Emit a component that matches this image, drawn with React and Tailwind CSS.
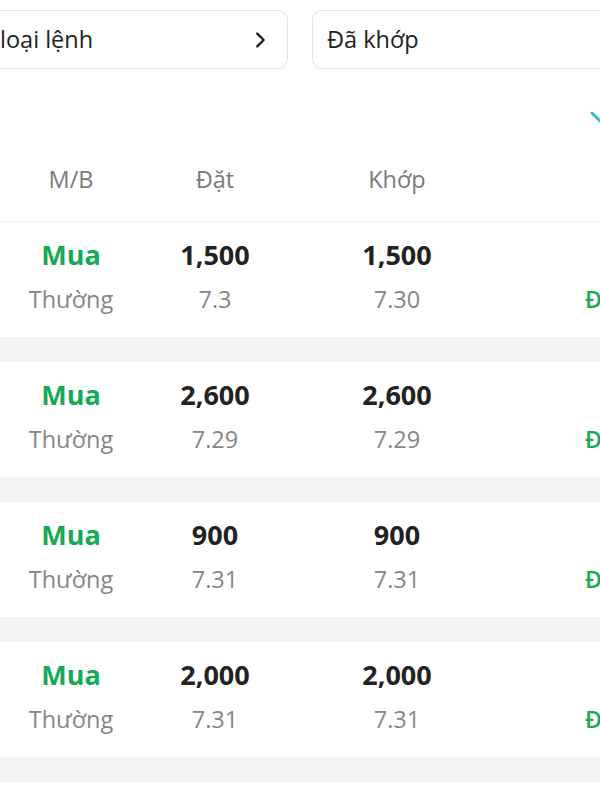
import React from "react";

const orders = [
  { side: "Mua", type: "Thường", qty: "1,500", price: "7.3", matchQty: "1,500", matchPrice: "7.30" },
  { side: "Mua", type: "Thường", qty: "2,600", price: "7.29", matchQty: "2,600", matchPrice: "7.29" },
  { side: "Mua", type: "Thường", qty: "900", price: "7.31", matchQty: "900", matchPrice: "7.31" },
  { side: "Mua", type: "Thường", qty: "2,000", price: "7.31", matchQty: "2,000", matchPrice: "7.31" },
];

const font = { fontFamily: "'Open Sans', 'Noto Sans', sans-serif" };

function Cell({ top, bottom, topClass }) {
  return (
    <div className="flex flex-col items-center gap-[12px]">
      <span className={"text-[27px] leading-[34px] font-bold " + topClass}>{top}</span>
      <span className="text-[23.5px] leading-[30px] text-[#868686]">{bottom}</span>
    </div>
  );
}

function OrderRow({ o }) {
  return (
    <div className="bg-white h-[115px] pt-[16px] grid grid-cols-[142px_146px_218px_1fr] items-start">
      <Cell top={o.side} bottom={o.type} topClass="text-[#17a955]" />
      <Cell top={o.qty} bottom={o.price} topClass="text-[#222]" />
      <Cell top={o.matchQty} bottom={o.matchPrice} topClass="text-[#222]" />
      <div className="flex flex-col gap-[12px] pl-[79px] whitespace-nowrap">
        <span className="text-[27px] leading-[34px]">&nbsp;</span>
        <span className="text-[23px] leading-[30px] font-semibold text-[#17a955]">Đã khớp</span>
      </div>
    </div>
  );
}

export default function App() {
  return (
    <div className="w-[600px] h-[800px] bg-white overflow-hidden" style={font}>
      <div className="flex gap-[24px] pt-[10px] h-[92px]">
        <div className="-ml-[20px] w-[308px] h-[59px] shrink-0 border border-[#e3e3e3] rounded-[10px] flex items-center justify-between pl-[19px] pr-[16px]">
          <span className="text-[23.5px] text-[#222]">loại lệnh</span>
          <svg width="22" height="22" viewBox="0 0 24 24" fill="none" stroke="#222" strokeWidth="2.6" strokeLinecap="round" strokeLinejoin="round">
            <path d="M9 5l7 7-7 7" />
          </svg>
        </div>
        <div className="w-[320px] h-[59px] shrink-0 border border-[#e3e3e3] rounded-[10px] flex items-center pl-[14px]">
          <span className="text-[23.5px] text-[#222]">Đã khớp</span>
        </div>
      </div>
      <div className="h-[41px] flex justify-end">
        <svg width="10" height="41" viewBox="0 0 10 41" fill="none" stroke="#2fbfc4" strokeWidth="3" strokeLinecap="round">
          <path d="M2 21l8 8" />
        </svg>
      </div>
      <div className="grid grid-cols-[142px_146px_218px_1fr] h-[89px] pt-[5px] items-center border-b border-[#ececec] text-[23.5px] text-[#7a7a7a]">
        <span className="text-center">M/B</span>
        <span className="text-center">Đặt</span>
        <span className="text-center">Khớp</span>
        <span></span>
      </div>
      <div className="flex flex-col">
        {orders.map((o, i) => (
          <div key={i}>
            <OrderRow o={o} />
            <div className="h-[25px] bg-[#f4f4f4]"></div>
          </div>
        ))}
      </div>
    </div>
  );
}
